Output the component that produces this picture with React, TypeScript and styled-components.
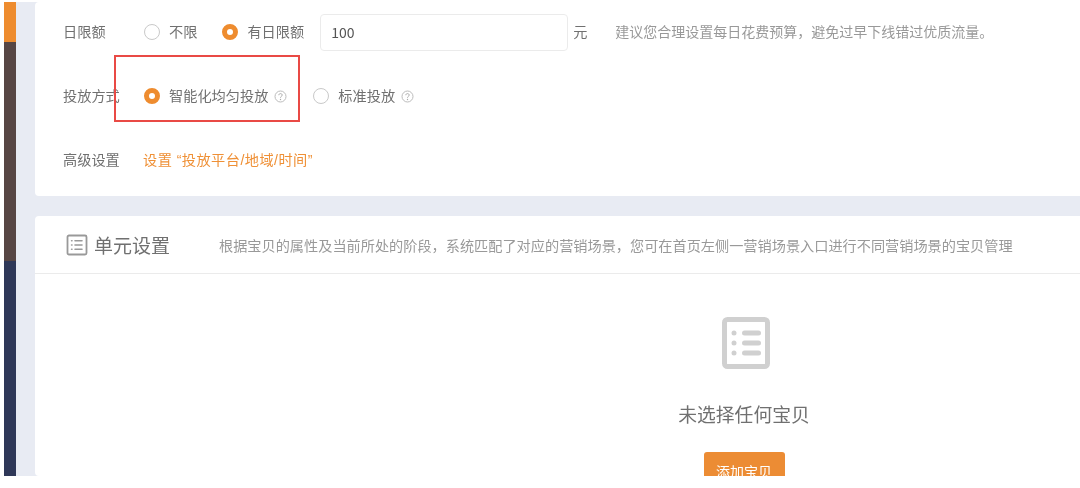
import React from "react";
import styled, { createGlobalStyle } from "styled-components";

const Global = createGlobalStyle`
  html, body { margin: 0; padding: 0; background: #fff; overflow: hidden; }
  body { font-family: "Noto Sans CJK SC", "Noto Sans", sans-serif; }
  #root { width: 1080px; height: 488px; overflow: hidden; }
`;

const Frame = styled.div`
  display: flex;
  width: 1080px;
  height: 474px;
  margin-top: 2px;
  padding-left: 4px;
  box-sizing: border-box;
  filter: blur(0.55px);
  overflow: hidden;
`;
const Rail = styled.div`
  width: 12px;
  flex: none;
  display: flex;
  flex-direction: column;
`;
const RailPart = styled.div<{ $h?: number; $c: string }>`
  background: ${(p) => p.$c};
  height: ${(p) => (p.$h ? `${p.$h}px` : "auto")};
  flex: ${(p) => (p.$h ? "none" : 1)};
`;
const Main = styled.div`
  flex: 1;
  min-width: 0;
  background: #e8ebf3;
  padding-left: 19px;
  display: flex;
  flex-direction: column;
  gap: 20px;
`;
const Card = styled.section`
  background: #fff;
  border-radius: 4px 0 0 4px;
  overflow: hidden;
`;
const FormCard = styled(Card)`
  position: relative;
  height: 194px;
  flex: none;
  padding-left: 28px;
  box-sizing: border-box;
`;
const Row = styled.div<{ $h: number }>`
  display: flex;
  align-items: center;
  height: ${(p) => p.$h}px;
  box-sizing: border-box;
  padding-bottom: 2px;
  font-size: 14.2px;
  color: #707070;
  white-space: nowrap;
`;
const Label = styled.span`
  width: 81px;
  flex: none;
`;
const Radio = styled.span<{ $on?: boolean }>`
  width: 16px;
  height: 16px;
  flex: none;
  box-sizing: border-box;
  border-radius: 50%;
  background: #fff;
  border: ${(p) => (p.$on ? "5px solid #ee8c2f" : "1px solid #c9c9c9")};
  margin: 2px 9px 0 0;
`;
const Option = styled.label<{ $gap?: number }>`
  display: flex;
  align-items: center;
  margin-right: ${(p) => p.$gap ?? 0}px;
`;
const Help = styled.svg`
  width: 13px;
  height: 13px;
  margin-left: 6px;
  margin-top: 3px;
  flex: none;
`;
const Amount = styled.div`
  width: 248px;
  height: 37px;
  box-sizing: border-box;
  border: 1px solid #ebebeb;
  border-radius: 4px;
  margin: 2px 0 0 16px;
  padding-left: 10px;
  display: flex;
  align-items: center;
  font-size: 14px;
  color: #555;
`;
const Unit = styled.span`
  margin-left: 5px;
  width: 42px;
  flex: none;
`;
const Hint = styled.span`
  color: #999;
  font-size: 14px;
`;
const Link = styled.span`
  color: #ef9036;
  margin-left: -1px;
  letter-spacing: 0.45px;
  font-family: "Liberation Sans", "Noto Sans CJK SC", sans-serif;
`;
const Highlight = styled.div`
  position: absolute;
  left: 79px;
  top: 53px;
  width: 186px;
  height: 67px;
  box-sizing: border-box;
  border: 2px solid #e94a45;
`;
const UnitCard = styled(Card)`
  flex: 1;
  min-height: 0;
`;
const CardHead = styled.header`
  display: flex;
  align-items: center;
  height: 57px;
  padding-left: 31px;
  border-bottom: 1px solid #ebebeb;
  white-space: nowrap;
`;
const HeadIcon = styled.svg`
  width: 22px;
  height: 22px;
  flex: none;
  margin-right: 6px;
`;
const HeadTitle = styled.h2`
  margin: 0 49px 0 0;
  font-size: 19px;
  font-weight: 400;
  color: #707070;
`;
const HeadHint = styled(Hint)`
  font-size: 14.18px;
`;
const Empty = styled.div`
  width: 1418px;
  display: flex;
  flex-direction: column;
  align-items: center;
  padding-top: 43px;
`;
const EmptyIcon = styled.svg`
  width: 48px;
  height: 52px;
  margin-left: 4px;
`;
const EmptyText = styled.p`
  margin: 31px 0 0;
  font-size: 18.8px;
  line-height: 28px;
  color: #707070;
`;
const AddButton = styled.button`
  margin-top: 24px;
  width: 81px;
  height: 38px;
  flex: none;
  border: 0;
  border-radius: 3px;
  background: #ec8c34;
  color: #fff;
  font-family: inherit;
  font-size: 14px;
  padding: 0;
`;

const HelpIcon = () => (
  <Help viewBox="0 0 13 13" fill="none">
    <circle cx="6.5" cy="6.5" r="5.5" stroke="#bbb" strokeWidth="1" />
    <path d="M4.8 5.2c0-1 .8-1.6 1.7-1.6s1.7.6 1.7 1.5c0 1.2-1.7 1.3-1.7 2.6" stroke="#aaa" strokeWidth="1" />
    <circle cx="6.5" cy="9.5" r=".7" fill="#aaa" />
  </Help>
);

const ListGlyph = ({ stroke, sw }: { stroke: string; sw: number }) => (
  <>
    <rect x="1.5" y="1.5" width="19" height="19" rx="1.5" fill="none" stroke={stroke} strokeWidth={sw} />
    <g stroke={stroke} strokeWidth="1.6" strokeLinecap="round">
      <path d="M9 6.8h7M9 11h7M9 15.2h7" />
      <path d="M5.6 6.8h.4M5.6 11h.4M5.6 15.2h.4" />
    </g>
  </>
);

export default function App() {
  return (
    <>
      <Global />
      <Frame>
        <Rail>
          <RailPart $h={40} $c="#ee8c2f" />
          <RailPart $h={219} $c="#574644" />
          <RailPart $c="#2f3858" />
        </Rail>
        <Main>
          <FormCard>
            <Row $h={60}>
              <Label>日限额</Label>
              <Radio />
              <Option $gap={25}>不限</Option>
              <Radio $on />
              <Option>有日限额</Option>
              <Amount>100</Amount>
              <Unit>元</Unit>
              <Hint>建议您合理设置每日花费预算，避免过早下线错过优质流量。</Hint>
            </Row>
            <Row $h={68}>
              <Label>投放方式</Label>
              <Radio $on />
              <Option $gap={26}>
                智能化均匀投放
                <HelpIcon />
              </Option>
              <Radio />
              <Option>
                标准投放
                <HelpIcon />
              </Option>
            </Row>
            <Row $h={60}>
              <Label>高级设置</Label>
              <Link>设置 “投放平台/地域/时间”</Link>
            </Row>
            <Highlight />
          </FormCard>
          <UnitCard>
            <CardHead>
              <HeadIcon viewBox="0 0 22 22">
                <ListGlyph stroke="#999" sw={1.8} />
              </HeadIcon>
              <HeadTitle>单元设置</HeadTitle>
              <HeadHint>根据宝贝的属性及当前所处的阶段，系统匹配了对应的营销场景，您可在首页左侧一营销场景入口进行不同营销场景的宝贝管理</HeadHint>
            </CardHead>
            <Empty>
              <EmptyIcon viewBox="0 0 48 52" fill="none">
                <rect x="2.5" y="2.5" width="43" height="47" rx="3" stroke="#d0d0d0" strokeWidth="5" />
                <g fill="#d0d0d0">
                  <circle cx="12" cy="16" r="2.5" />
                  <circle cx="12" cy="26" r="2.5" />
                  <circle cx="12" cy="36" r="2.5" />
                  <rect x="20" y="13.5" width="19" height="5" rx="2.5" />
                  <rect x="20" y="23.5" width="19" height="5" rx="2.5" />
                  <rect x="20" y="33.5" width="19" height="5" rx="2.5" />
                </g>
              </EmptyIcon>
              <EmptyText>未选择任何宝贝</EmptyText>
              <AddButton>添加宝贝</AddButton>
            </Empty>
          </UnitCard>
        </Main>
      </Frame>
    </>
  );
}
